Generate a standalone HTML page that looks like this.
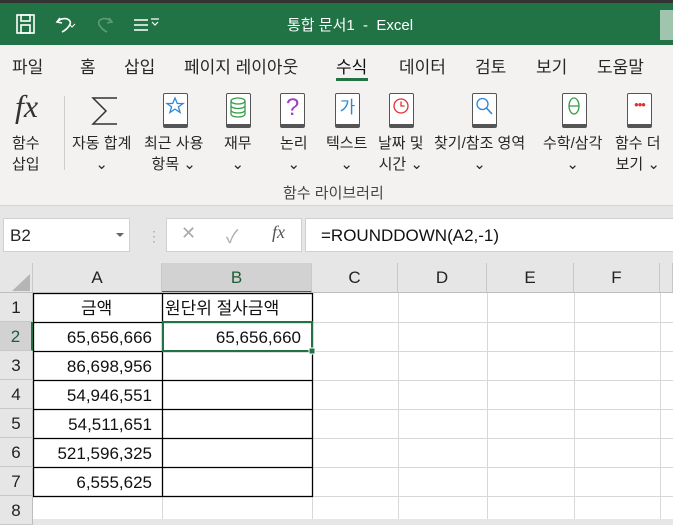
<!DOCTYPE html>
<html><head><meta charset="utf-8"><style>
*{margin:0;padding:0;box-sizing:border-box}
body{width:673px;height:519px;overflow:hidden;background:#e6e6e6;font-family:"Liberation Sans","Noto Sans CJK KR",sans-serif;position:relative}
.a{position:absolute}
.t{font-size:15px;color:#262626;white-space:nowrap}
.lbl{font-size:15px;color:#262626;text-align:center;line-height:21px;white-space:nowrap}
.book{position:absolute;width:25px;height:35px;border:1.5px solid #555;border-radius:2px;background:#fff;border-bottom-width:4px}
.hdr{position:absolute;top:263px;height:30px;background:#e6e6e6;border-right:1px solid #c8c8c8;font-size:17px;color:#222;text-align:center;line-height:30px}
.rh{position:absolute;left:0;width:33px;height:29px;background:#e6e6e6;border-bottom:1px solid #c8c8c8;border-right:1px solid #bdbdbd;font-size:17px;color:#222;text-align:center;line-height:29px}
.c{position:absolute;font-size:17px;color:#111;line-height:29px;height:29px;white-space:nowrap}
</style></head><body>
<div class="a" style="left:0;top:0;width:673px;height:3px;background:#333"></div>
<div class="a" style="left:0;top:3px;width:673px;height:42px;background:#217346"></div>
<div class="a" style="left:660px;top:10px;width:13px;height:30px;background:#9fc5ae"></div>
<svg class="a" style="left:14px;top:12px" width="150" height="24" viewBox="0 0 150 24" fill="none" stroke="#fff" stroke-width="1.6">
<rect x="3" y="3" width="17" height="18"/><rect x="7" y="3" width="9" height="6"/><rect x="7" y="13" width="9" height="8"/>
<path d="M46 6 L43 10 L48 11 M43 10 C50 3 60 8 55 14 C53 17 50 19 48 20"/>
<path d="M55 12 l3 3 l3-3" stroke-width="1"/>
<path d="M95 6 L98 10 L93 11 M98 10 C91 3 81 8 86 14 C88 17 91 19 93 20" stroke="#5f9a77"/>
<path d="M120 8h14M120 13h14M120 18h14"/>
</svg>
<svg class="a" style="left:150px;top:18px" width="10" height="8"><path d="M1 1h8M2 4l3 3 3-3" stroke="#fff" fill="none" stroke-width="1.2"/></svg>
<div class="a t" style="left:287px;top:14px;color:#fff;font-size:15px">통합 문서1 &nbsp;- &nbsp;Excel</div>
<div class="a" style="left:0;top:45px;width:673px;height:160px;background:#f3f2f1"></div>
<div class="a t" style="top:53px;left:12px;font-size:17px">파일</div>
<div class="a t" style="top:53px;left:80px;font-size:17px">홈</div>
<div class="a t" style="top:53px;left:124px;font-size:17px">삽입</div>
<div class="a t" style="top:53px;left:184px;font-size:17px">페이지 레이아웃</div>
<div class="a t" style="top:53px;left:336px;font-size:17px;color:#111">수식</div>
<div class="a" style="left:336px;top:78px;width:32px;height:3px;background:#217346"></div>
<div class="a t" style="top:53px;left:399px;font-size:17px">데이터</div>
<div class="a t" style="top:53px;left:475px;font-size:17px">검토</div>
<div class="a t" style="top:53px;left:536px;font-size:17px">보기</div>
<div class="a t" style="top:53px;left:597px;font-size:17px">도움말</div>
<div class="a" style="left:15px;top:88px;font-family:'Liberation Serif',serif;font-style:italic;font-size:32px;color:#333">fx</div>
<div class="a" style="left:64px;top:96px;width:1px;height:74px;background:#ccc"></div>
<svg class="a" style="left:90px;top:95px" width="30" height="32"><path d="M27 3H3L16 16 3 29H27" fill="none" stroke="#333" stroke-width="1.5"/></svg>
<div class="book" style="left:163px;top:93px"><svg width="22" height="28"><path d="M11 4l2.3 5.5h5.7l-4.6 3.4 1.7 5.6-5.1-3.4-5.1 3.4 1.7-5.6-4.6-3.4h5.7z" fill="none" stroke="#2b88d8" stroke-width="1.3"/></svg></div>
<div class="book" style="left:226px;top:93px"><svg width="22" height="28"><ellipse cx="11" cy="7" rx="7" ry="3" fill="none" stroke="#3a9d4c" stroke-width="1.3"/><path d="M4 7v13c0 4 14 4 14 0V7M4 11.5c0 4 14 4 14 0M4 16c0 4 14 4 14 0" fill="none" stroke="#3a9d4c" stroke-width="1.3"/></svg></div>
<div class="book" style="left:280px;top:93px"><div style="color:#a040c0;font-size:24px;text-align:center;line-height:28px">?</div></div>
<div class="book" style="left:335px;top:93px"><div style="color:#2b88d8;font-size:17px;text-align:center;line-height:28px">가</div></div>
<div class="book" style="left:389px;top:93px"><svg width="22" height="28"><circle cx="11" cy="12" r="7" fill="none" stroke="#e03030" stroke-width="1.3"/><path d="M11 7.5v4.5h3.5" fill="none" stroke="#e03030" stroke-width="1.3"/></svg></div>
<div class="book" style="left:472px;top:93px"><svg width="22" height="28"><circle cx="9.5" cy="10" r="5.5" fill="none" stroke="#2b88d8" stroke-width="1.3"/><path d="M13.5 14l5.5 6" stroke="#2b88d8" stroke-width="1.6"/></svg></div>
<div class="book" style="left:562px;top:93px"><svg width="22" height="28"><ellipse cx="11" cy="12" rx="5" ry="8" fill="none" stroke="#3a9d4c" stroke-width="1.3"/><path d="M6 12h10" stroke="#3a9d4c" stroke-width="1.3"/></svg></div>
<div class="book" style="left:627px;top:93px"><div style="color:#e03030;font-size:13px;text-align:center;line-height:22px;letter-spacing:-1px">•••</div></div>
<div class="a lbl" style="left:12px;top:133px">함수<br>삽입</div>
<div class="a lbl" style="left:72px;top:133px">자동 합계<br>⌄</div>
<div class="a lbl" style="left:144px;top:133px">최근 사용<br>항목 ⌄</div>
<div class="a lbl" style="left:224px;top:133px">재무<br>⌄</div>
<div class="a lbl" style="left:280px;top:133px">논리<br>⌄</div>
<div class="a lbl" style="left:326px;top:133px">텍스트<br>⌄</div>
<div class="a lbl" style="left:378px;top:133px">날짜 및<br>시간 ⌄</div>
<div class="a lbl" style="left:434px;top:133px">찾기/참조 영역<br>⌄</div>
<div class="a lbl" style="left:543px;top:133px">수학/삼각<br>⌄</div>
<div class="a lbl" style="left:615px;top:133px">함수 더<br>보기 ⌄</div>
<div class="a lbl" style="left:283px;top:183px;color:#444">함수 라이브러리</div>
<div class="a" style="left:0;top:205px;width:673px;height:1px;background:#d6d6d6"></div>
<div class="a" style="left:3px;top:218px;width:127px;height:34px;background:#fff;border:1px solid #d0d0d0"></div>
<div class="a t" style="left:10px;top:226px;font-size:17px">B2</div>
<div class="a" style="left:116px;top:233px;border:4px solid transparent;border-top:4px solid #666"></div>
<div class="a" style="left:147px;top:228px;color:#aaa;font-size:14px">⋮</div>
<div class="a" style="left:166px;top:218px;width:136px;height:34px;background:#fff;border:1px solid #d0d0d0"></div>
<div class="a" style="left:181px;top:223px;color:#aaa;font-size:18px">✕</div>
<div class="a" style="left:226px;top:223px;color:#aaa;font-size:18px">✓</div>
<div class="a" style="left:272px;top:222px;font-family:'Liberation Serif',serif;font-style:italic;color:#555;font-size:18px">fx</div>
<div class="a" style="left:305px;top:218px;width:370px;height:34px;background:#fff;border:1px solid #d0d0d0"></div>
<div class="a t" style="left:321px;top:226px;font-size:17px;color:#111">=ROUNDDOWN(A2,-1)</div>
<div class="a" style="left:0;top:263px;width:673px;height:256px;background:#fff"></div>
<div class="a" style="left:0;top:263px;width:33px;height:30px;background:#e6e6e6;border-right:1px solid #c8c8c8"></div>
<svg class="a" style="left:8px;top:274px" width="22" height="18"><path d="M22 0V17H4z" fill="#b5b5b5"/></svg>
<div class="hdr" style="left:33px;width:129px">A</div>
<div class="hdr" style="left:162px;width:150px;background:#d2d2d2;color:#1d5e37;border-bottom:2px solid #217346">B</div>
<div class="hdr" style="left:312px;width:86px">C</div>
<div class="hdr" style="left:398px;width:89px">D</div>
<div class="hdr" style="left:487px;width:87px">E</div>
<div class="hdr" style="left:574px;width:86px">F</div>
<div class="hdr" style="left:660px;width:13px"></div>
<div class="a" style="left:0;top:292px;width:673px;height:1px;background:#bdbdbd"></div>
<svg class="a" style="left:33px;top:293px" width="640" height="226">
<g stroke="#d8d8d8" stroke-width="1">
<path d="M0 29.5H640M0 58.5H640M0 87.5H640M0 116.5H640M0 145.5H640M0 174.5H640M0 203.5H640"/>
<path d="M129.5 0V226M279.5 0V226M365.5 0V226M454.5 0V226M541.5 0V226M627.5 0V226"/>
</g>
<g stroke="#000" stroke-width="1.3" fill="none">
<rect x="0.5" y="0.5" width="279" height="203"/>
<path d="M129.5 0V203.5M0 29.5H280M0 58.5H280M0 87.5H280M0 116.5H280M0 145.5H280M0 174.5H280"/>
</g>
<rect x="130" y="29" width="149" height="29" fill="none" stroke="#217346" stroke-width="2"/>
<rect x="276" y="55" width="6" height="6" fill="#217346" stroke="#fff" stroke-width="1"/>
</svg>
<div class="rh" style="top:293px">1</div>
<div class="rh" style="top:322px;background:#d2d2d2;color:#1d5e37;border-right:2px solid #217346">2</div>
<div class="rh" style="top:351px">3</div>
<div class="rh" style="top:380px">4</div>
<div class="rh" style="top:409px">5</div>
<div class="rh" style="top:438px">6</div>
<div class="rh" style="top:467px">7</div>
<div class="rh" style="top:496px">8</div>
<div class="c" style="left:81px;top:294px">금액</div>
<div class="c" style="left:165px;top:294px">원단위 절사금액</div>
<div class="c" style="left:33px;width:119px;text-align:right;top:323px">65,656,666</div>
<div class="c" style="left:162px;width:139px;text-align:right;top:323px">65,656,660</div>
<div class="c" style="left:33px;width:119px;text-align:right;top:352px">86,698,956</div>
<div class="c" style="left:33px;width:119px;text-align:right;top:381px">54,946,551</div>
<div class="c" style="left:33px;width:119px;text-align:right;top:410px">54,511,651</div>
<div class="c" style="left:33px;width:119px;text-align:right;top:439px">521,596,325</div>
<div class="c" style="left:33px;width:119px;text-align:right;top:468px">6,555,625</div>
</body></html>
